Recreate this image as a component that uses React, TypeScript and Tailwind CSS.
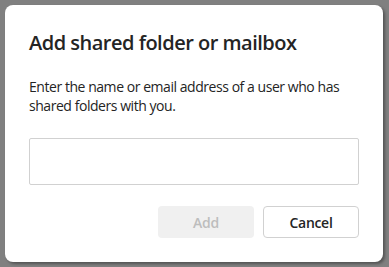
export default function App() {
  return (
    <div className="w-[389px] h-[267px] bg-[#808080] pt-[5px] pl-[5px]" style={{ fontFamily: '"Open Sans", "Noto Sans", sans-serif' }}>
      <div className="w-[378px] h-[257px] bg-white rounded-lg px-6 pt-6 pb-6 flex flex-col shadow-[2px_2px_3px_rgba(0,0,0,0.35)]">
        <h1 className="text-[20px] leading-[28px] font-semibold text-[#242424] tracking-[-0.5px]">Add shared folder or mailbox</h1>
        <p className="mt-5 text-[14px] leading-[19px] text-[#242424] tracking-[-0.45px]">
          Enter the name or email address of a user who has shared folders with you.
        </p>
        <input className="mt-[23px] w-[330px] h-[47px] border border-[#d1d1d1] rounded-[2px] outline-none" />
        <div className="mt-[21px] flex justify-end gap-[9px]">
          <button className="w-[96px] h-[32px] rounded bg-[#f0f0f0] text-[#bdbdbd] text-[14px] font-semibold tracking-[-0.3px]">Add</button>
          <button className="w-[96px] h-[32px] rounded border border-[#d1d1d1] bg-white text-[#242424] text-[14px] font-semibold tracking-[-0.3px]">Cancel</button>
        </div>
      </div>
    </div>
  );
}
